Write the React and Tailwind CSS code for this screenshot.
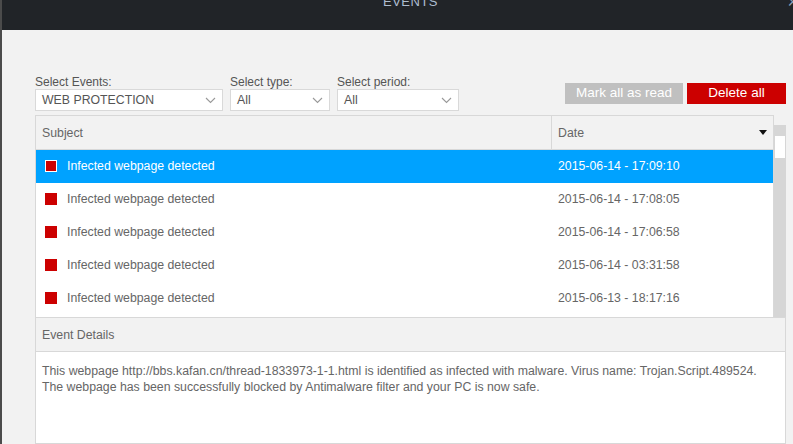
import React from "react";

const rows = [
  { s: "Infected webpage detected", d: "2015-06-14 - 17:09:10", sel: true },
  { s: "Infected webpage detected", d: "2015-06-14 - 17:08:05" },
  { s: "Infected webpage detected", d: "2015-06-14 - 17:06:58" },
  { s: "Infected webpage detected", d: "2015-06-14 - 03:31:58" },
  { s: "Infected webpage detected", d: "2015-06-13 - 18:17:16" },
];

function Chevron() {
  return (
    <svg width="11" height="7" viewBox="0 0 11 7" className="shrink-0">
      <path d="M1 1 L5.5 5.5 L10 1" fill="none" stroke="#999" strokeWidth="1.1" />
    </svg>
  );
}

function Select({ w, value, label }) {
  return (
    <div className="flex flex-col">
      <div className="h-[14px] text-[12px] leading-[14px] text-[#555]">{label}</div>
      <div
        className={`${w} h-[22px] bg-white border border-[#d9d9d9] flex items-center justify-between pl-[6px] pr-[6px] text-[12.3px] text-[#555]`}
      >
        <span>{value}</span>
        <Chevron />
      </div>
    </div>
  );
}

export default function App() {
  return (
    <div
      className="w-[793px] h-[444px] overflow-hidden flex bg-[#f2f2f2]"
      style={{ fontFamily: '"Liberation Sans", Arial, sans-serif' }}
    >
      <div className="w-[2px] bg-[#4b4b4b] shrink-0" />
      <div className="flex-1 flex flex-col min-w-0">
        <div className="h-[30px] bg-[#212428] flex items-start shrink-0 overflow-hidden">
          <div className="pl-[381px] mt-[-5px] text-[13px] leading-[14px] text-[#aebdd0] tracking-[0.5px]">
            EVENTS
          </div>
          <div className="ml-auto mr-[-5px] mt-[-7px] text-[18px] leading-[18px] text-[#8d9db2]">×</div>
        </div>
        <div className="flex-1 flex flex-col pl-[33px] pr-[7px] pt-[45px] min-h-0">
          <div className="flex items-start shrink-0">
            <div className="flex gap-[7px]">
              <Select w="w-[188px]" value="WEB PROTECTION" label="Select Events:" />
              <Select w="w-[100px]" value="All" label="Select type:" />
              <Select w="w-[122px]" value="All" label="Select period:" />
            </div>
            <div className="ml-auto mt-[8px] flex gap-[4px]">
              <div className="w-[118px] h-[21px] bg-[#c0c0c0] text-white text-[13.5px] flex items-center justify-center">
                Mark all as read
              </div>
              <div className="w-[99px] h-[21px] bg-[#cc0000] text-white text-[13.5px] flex items-center justify-center">
                Delete all
              </div>
            </div>
          </div>

          <div className="mt-[4px] flex shrink-0">
            <div className="w-[739px] border border-[#d8d8d8] border-b-0 bg-white">
              <div className="h-[34px] bg-[#f2f2f2] border-b border-[#d8d8d8] flex text-[12.3px] text-[#666] pt-[2px]">
                <div className="w-[515px] flex items-center pl-[6px]">Subject</div>
                <div className="flex-1 border-l border-[#d8d8d8] mt-[-2px] flex items-center pl-[6px] pr-[6px] pt-[2px]">
                  <span>Date</span>
                  <svg width="8" height="5" viewBox="0 0 8 5" className="ml-auto mb-[2px]">
                    <path d="M0 0 H8 L4 5 Z" fill="#111" />
                  </svg>
                </div>
              </div>
              {rows.map((r, i) => (
                <div
                  key={i}
                  className={`h-[33px] flex items-center text-[12.3px] leading-[14px] pb-[1px] ${
                    r.sel ? "bg-[#00a2ff] text-white" : "bg-white text-[#666]"
                  }`}
                >
                  <div className="w-[515px] flex items-center pl-[9px]">
                    <span
                      className={`w-[12px] h-[12px] bg-[#cc0000] shrink-0 ${
                        r.sel ? "border border-white" : ""
                      }`}
                    />
                    <span className="ml-[10px]">{r.s}</span>
                  </div>
                  <div className="pl-[7px]">{r.d}</div>
                </div>
              ))}
              <div className="h-[2px] bg-white" />
            </div>
            <div className="w-[12px] mt-[10px] bg-[#d6d6d6] pt-[11px] px-[1px]">
              <div className="h-[22px] bg-white" />
            </div>
          </div>

          <div className="flex-1 flex flex-col border border-[#d8d8d8] bg-white min-h-0">
            <div className="h-[34px] bg-[#f2f2f2] border-b border-[#d8d8d8] flex items-center pl-[6px] pt-[2px] text-[12.3px] text-[#666] shrink-0">
              Event Details
            </div>
            <div className="pt-[11px] px-[6px] text-[12.3px] leading-[16px] text-[#666]">
              This webpage http://bbs.kafan.cn/thread-1833973-1-1.html is identified as infected with malware. Virus name: Trojan.Script.489524.
              <br />
              The webpage has been successfully blocked by Antimalware filter and your PC is now safe.
            </div>
          </div>
        </div>
      </div>
    </div>
  );
}
